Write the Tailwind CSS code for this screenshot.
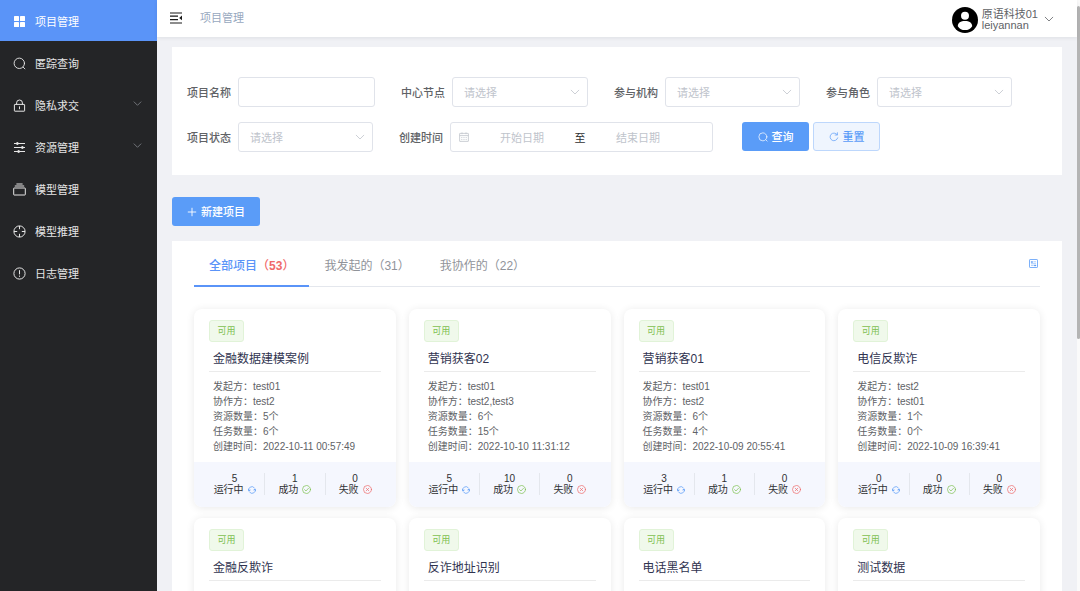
<!DOCTYPE html>
<html lang="zh-CN">
<head>
<meta charset="utf-8">
<meta name="viewport" content="width=device-width, initial-scale=1">
<title>项目管理</title>
<script src="https://cdn.jsdelivr.net/npm/@tailwindcss/browser@4"></script>
</head>
<body class="flex h-screen overflow-hidden bg-[#f0f1f5] font-['Liberation_Sans','Noto_Sans_CJK_SC',sans-serif] text-[#606266]">
<svg class="hidden">
  <symbol id="chevron" viewBox="0 0 10 10"><path d="M1.2 3.2 5 7l3.8-3.8" fill="none" stroke="currentColor" stroke-width=".8" stroke-linecap="round"/></symbol>
  <symbol id="search" viewBox="0 0 14 14"><g fill="none" stroke="currentColor" stroke-linecap="round"><circle cx="6.8" cy="6.8" r="5.6"/><path d="m11 11 1.8 1.8"/></g></symbol>
  <symbol id="reset" viewBox="0 0 14 14"><g fill="none" stroke="currentColor" stroke-linecap="round"><path d="M12.2 8.2A5.4 5.4 0 1 1 11.3 3.6M11.8 1v3.2H8.6"/></g></symbol>
  <symbol id="running" viewBox="0 0 14 14"><g fill="none" stroke="currentColor" stroke-width="1.3" stroke-linecap="round"><path d="M1.5 8.500A5.600 5.600 0 0 1 11 3M.6 5.800l.9 2.700 2.400-1.300"/><path d="M12.500 5.500A5.600 5.600 0 0 1 3 11M13.400 8.200l-.9-2.700-2.400 1.300"/></g></symbol>
  <symbol id="success" viewBox="0 0 14 14"><g fill="none" stroke="currentColor" stroke-width="1.1" stroke-linecap="round"><circle cx="7" cy="7" r="6.2"/><path d="m4 7.2 2.2 2.1L10 5.2"/></g></symbol>
  <symbol id="failed" viewBox="0 0 14 14"><g fill="none" stroke="currentColor" stroke-width="1.1" stroke-linecap="round"><circle cx="7" cy="7" r="6.2"/><path d="m5 5 4 4m0-4-4 4"/></g></symbol>
</svg>

<nav class="w-[157px] shrink-0 bg-[#242527] font-['Noto_Sans_CJK_SC',sans-serif] text-[11px] text-[#e6e6e6]">
  <a href="#" class="flex h-[41px] items-center gap-[9px] bg-[#5a94f8] px-[13px] pt-px text-white">
    <svg class="size-[13px]" viewBox="0 0 13 13" fill="currentColor"><rect x="1" y="1" width="5" height="5" rx=".6"/><rect x="7" y="1" width="5" height="5" rx=".6"/><rect x="1" y="7" width="5" height="5" rx=".6"/><rect x="7" y="7" width="5" height="5" rx=".6"/></svg>项目管理</a>
  <a href="#" class="mt-px flex h-[42px] items-center gap-[9px] px-[13px]">
    <svg class="size-[13px]"><use href="#search"/></svg>匿踪查询</a>
  <a href="#" class="flex h-[42px] items-center gap-[9px] px-[13px]">
    <svg class="size-[13px]" viewBox="0 0 13 13" fill="none" stroke="currentColor"><rect x="1.4" y="5.4" width="10.2" height="6.8" rx=".4"/><path d="M3.6 5.4V3.9a2.9 2.9 0 0 1 5.8 0v1.5M6.5 7.4v2.8"/></svg>隐私求交
    <svg class="mr-[2px] mb-[3px] ml-auto size-[9px] text-[#909399]"><use href="#chevron"/></svg></a>
  <a href="#" class="flex h-[42px] items-center gap-[9px] px-[13px]">
    <svg class="size-[13px]" viewBox="0 0 13 13" stroke="currentColor" fill="currentColor"><path d="M1 2.5h11M1 6.5h11M1 10.5h11"/><circle cx="4.4" cy="2.5" r="1"/><circle cx="9.4" cy="6.5" r="1"/><circle cx="5.6" cy="10.5" r="1"/></svg>资源管理
    <svg class="mr-[2px] mb-[3px] ml-auto size-[9px] text-[#909399]"><use href="#chevron"/></svg></a>
  <a href="#" class="flex h-[42px] items-center gap-[9px] px-[13px]">
    <svg class="size-[13px]" viewBox="0 0 13 13" fill="none" stroke="currentColor"><rect x=".7" y="5" width="11.6" height="7" rx=".4"/><path d="M1.8 3h9.4M3.4 1h6.2"/></svg>模型管理</a>
  <a href="#" class="flex h-[42px] items-center gap-[9px] px-[13px]">
    <svg class="size-[13px]" viewBox="0 0 13 13" fill="none" stroke="currentColor"><circle cx="6.5" cy="6.5" r="5.6"/><path d="M6.5 1v3.2M6.5 8.8V12M1 6.5h3.2M8.8 6.5H12"/></svg>模型推理</a>
  <a href="#" class="flex h-[42px] items-center gap-[9px] px-[13px]">
    <svg class="size-[13px]" viewBox="0 0 13 13" fill="none" stroke="currentColor"><circle cx="6.5" cy="6.5" r="5.6"/><path d="M6.5 3.2v4.2M6.5 8.6v1.2"/></svg>日志管理</a>
</nav>

<div class="flex min-w-0 flex-1 flex-col">
  <header class="z-10 flex h-[37px] shrink-0 items-center bg-white pr-[23px] pl-3 shadow-[0_1px_4px_rgba(0,21,41,0.08)]">
    <button type="button" aria-label="收起菜单" class="mr-[17px] mb-[2px] text-[#1a1a1a]">
      <svg class="block size-[14px]" viewBox="0 0 14 14"><path d="M1 2h12M1 5.2h8M1 8.6h8M1 12h12" fill="none" stroke="currentColor" stroke-width="1.2"/><path d="M13 4.6v4.6L10.2 6.9z" fill="currentColor"/></svg>
    </button>
    <span class="text-[11px] text-[#97a8be]">项目管理</span>
    <button type="button" class="ml-auto flex items-center pt-[2px] text-left text-[11px] leading-[11px]">
      <svg class="mr-1 size-[26px]" viewBox="0 0 26 26"><circle cx="13" cy="13" r="13" fill="#000"/><circle cx="13" cy="8.7" r="4" fill="#fff"/><path d="M5.8 19.2c0-3.4 3-5.2 7.2-5.2s7.2 1.800 7.200 5.200c-1.600 2.500-4.200 3.900-7.200 3.900s-5.600-1.400-7.200-3.900z" fill="#fff"/></svg>
      <span>原语科技01<br>leiyannan</span>
      <svg class="mb-[2px] ml-[6px] size-[10px]"><use href="#chevron"/></svg>
    </button>
  </header>

  <main class="min-h-0 flex-1 overflow-hidden px-[15px] pt-[10px]">
    <form class="flex flex-wrap items-start gap-x-[26px] gap-y-[15px] bg-white pt-[30px] pr-[15px] pb-[23px] pl-[15px] font-['Noto_Sans_CJK_SC',sans-serif] text-[11px]">
      <div class="flex h-[30px] items-center">
        <label for="name" class="w-[51px] font-medium">项目名称</label>
        <input id="name" type="text" class="h-full w-[137px] rounded-[3px] border border-[#e0e3ea] px-3 outline-none">
      </div>
      <div class="flex h-[30px] items-center">
        <label for="node" class="w-[51px] font-medium">中心节点</label>
        <div class="relative h-full w-[136px]"><select id="node" class="size-full appearance-none rounded-[3px] border border-[#e0e3ea] bg-white px-[11px] text-[#c0c4cc]"><option>请选择</option></select><svg class="pointer-events-none absolute top-[10px] right-2 size-[10px] text-[#c0c4cc]"><use href="#chevron"/></svg></div>
      </div>
      <div class="flex h-[30px] items-center">
        <label for="org" class="w-[51px] font-medium">参与机构</label>
        <div class="relative h-full w-[135px]"><select id="org" class="size-full appearance-none rounded-[3px] border border-[#e0e3ea] bg-white px-[11px] text-[#c0c4cc]"><option>请选择</option></select><svg class="pointer-events-none absolute top-[10px] right-2 size-[10px] text-[#c0c4cc]"><use href="#chevron"/></svg></div>
      </div>
      <div class="flex h-[30px] items-center">
        <label for="role" class="w-[51px] font-medium">参与角色</label>
        <div class="relative h-full w-[135px]"><select id="role" class="size-full appearance-none rounded-[3px] border border-[#e0e3ea] bg-white px-[11px] text-[#c0c4cc]"><option>请选择</option></select><svg class="pointer-events-none absolute top-[10px] right-2 size-[10px] text-[#c0c4cc]"><use href="#chevron"/></svg></div>
      </div>
      <div class="flex h-[30px] items-center">
        <label for="status" class="w-[51px] font-medium">项目状态</label>
        <div class="relative h-full w-[135px]"><select id="status" class="size-full appearance-none rounded-[3px] border border-[#e0e3ea] bg-white px-[11px] text-[#c0c4cc]"><option>请选择</option></select><svg class="pointer-events-none absolute top-[10px] right-2 size-[10px] text-[#c0c4cc]"><use href="#chevron"/></svg></div>
      </div>
      <div class="flex h-[30px] items-center">
        <label for="start" class="w-[51px] font-medium">创建时间</label>
        <div class="flex h-full w-[263px] items-center rounded-[3px] border border-[#e0e3ea] pl-2">
          <svg class="mr-1 size-[10px] text-[#c0c4cc]" viewBox="0 0 10 10" fill="none" stroke="currentColor" stroke-width=".8"><rect x=".6" y="1.400" width="8.800" height="8" rx=".3"/><path d="M.6 3.600h8.800M3 .4v1.800M7 .4v1.800M2.200 5.600h1.200M4.400 5.600h1.200M6.600 5.600h1.200M2.200 7.600h1.200M4.400 7.600h1.200M6.600 7.600h1.200"/></svg>
          <input id="start" type="text" placeholder="开始日期" class="h-full w-[98px] text-center outline-none placeholder:text-[#c0c4cc]">
          <span class="w-[18px] text-center text-[#303133]">至</span>
          <input type="text" aria-label="结束日期" placeholder="结束日期" class="h-full w-[98px] text-center outline-none placeholder:text-[#c0c4cc]">
        </div>
      </div>
      <div class="flex gap-1 pl-[3px] font-medium">
        <button type="button" class="flex h-[29px] w-[67px] items-center justify-center gap-1 rounded-[3px] bg-[#5a9cf8] text-white"><svg class="size-[10px]"><use href="#search"/></svg>查询</button>
        <button type="button" class="flex h-[29px] w-[67px] items-center justify-center gap-1 rounded-[3px] border border-[#bdd7fc] bg-[#eff5fe] text-[#5a9cf8]"><svg class="size-[10px]"><use href="#reset"/></svg>重置</button>
      </div>
    </form>

    <button type="button" class="mt-[22px] flex h-[29px] items-center gap-1 rounded-[3px] bg-[#5a9cf8] px-[15px] font-['Noto_Sans_CJK_SC',sans-serif] text-[11px] font-medium text-white">
      <svg class="size-[10px]" viewBox="0 0 10 10" stroke="currentColor" stroke-width=".9"><path d="M5 .8v8.400M.8 5h8.400"/></svg>新建项目</button>

    <section class="mt-[15px] bg-white px-[22px] pb-6">
      <div class="flex h-[46px] border-b border-[#e4e7ed] text-xs text-[#909399]">
        <div role="tablist" class="-mb-px flex">
          <button type="button" role="tab" aria-selected="true" class="border-b-2 border-[#5a94f8] px-[15px] pt-[6px] font-medium text-[#5a94f8]">全部项目<span class="text-[#f06a6a]">（<b>53</b>）</span></button>
          <button type="button" role="tab" aria-selected="false" class="border-b-2 border-transparent px-[15px] pt-[6px]">我发起的（31）</button>
          <button type="button" role="tab" aria-selected="false" class="border-b-2 border-transparent px-[15px] pt-[6px]">我协作的（22）</button>
        </div>
        <button type="button" aria-label="切换列表" class="ml-auto pr-[2px] text-[#5a9cf8]">
          <svg class="size-[9px]" viewBox="0 0 9 9" fill="none" stroke="currentColor"><rect x=".5" y=".5" width="8" height="8" rx=".6" stroke-width=".8"/><path d="M2 2.500h1.800v1H2zM5.200 6h1.800v1H5.200z" fill="currentColor" stroke-width=".3"/><path d="M4.500 2.800H7M2 6.400h2.600M2 4.700h5" stroke-width=".5"/></svg>
        </button>
      </div>
      <div id="cards" class="mt-[22px] grid grid-cols-4 gap-x-[13px] gap-y-[11px]"></div>
    </section>
  </main>
</div>

<div class="w-[3px] shrink-0 bg-[#fafafa] pt-[6px]"><div class="h-[57%] rounded-sm bg-[#b4b4b4]"></div></div>

<script>
const projects = [
  ['金融数据建模案例', [['发起方','test01'],['协作方','test2'],['资源数量','5个'],['任务数量','6个'],['创建时间','2022-10-11 00:57:49']], [5,1,0]],
  ['营销获客02', [['发起方','test01'],['协作方','test2,test3'],['资源数量','6个'],['任务数量','15个'],['创建时间','2022-10-10 11:31:12']], [5,10,0]],
  ['营销获客01', [['发起方','test01'],['协作方','test2'],['资源数量','6个'],['任务数量','4个'],['创建时间','2022-10-09 20:55:41']], [3,1,0]],
  ['电信反欺诈', [['发起方','test2'],['协作方','test01'],['资源数量','1个'],['任务数量','0个'],['创建时间','2022-10-09 16:39:41']], [0,0,0]],
  ['金融反欺诈', []],
  ['反诈地址识别', []],
  ['电话黑名单', []],
  ['测试数据', []]
];
const footer = n => `
  <div class="flex bg-[#f5f7fe] px-[11px] pt-[11px] pb-3 text-center text-[10px] leading-[11px] text-[#303133]">
    <div class="flex-1 border-r border-[#e4e7ed]">${n[0]}<div class="flex items-center justify-center gap-1">运行中<svg class="size-2 text-[#5a9cf8]"><use href="#running"/></svg></div></div>
    <div class="flex-1 border-r border-[#e4e7ed]">${n[1]}<div class="flex items-center justify-center gap-1">成功<svg class="size-[9px] text-[#7ec050]"><use href="#success"/></svg></div></div>
    <div class="flex-1">${n[2]}<div class="flex items-center justify-center gap-1">失败<svg class="size-[9px] text-[#f06a6a]"><use href="#failed"/></svg></div></div>
  </div>`;
document.getElementById('cards').innerHTML = projects.map(([title, rows, counts]) => `
  <article class="min-h-[198px] overflow-hidden rounded-lg bg-white shadow-[0_1px_8px_rgba(0,0,0,0.09)]">
    <div class="px-[15px] pt-[11px] pb-2">
      <span class="flex h-[22px] w-[35px] items-center justify-center rounded-[3px] border border-[#e1f3d8] bg-[#f0f9eb] font-['Noto_Sans_CJK_SC',sans-serif] text-[9px] text-[#7ec050]">可用</span>
      <h2 class="border-b border-[#ebebeb] px-1 pt-2 pb-[3px] text-xs leading-[18px] text-[#30334f]">${title}</h2>
      <div class="px-1 pt-[7px] text-[10px] leading-[15px]">${rows.map(([k, v]) => `<p>${k}：${v}</p>`).join('')}</div>
    </div>${counts ? footer(counts) : ''}
  </article>`).join('');
</script>
</body>
</html>
